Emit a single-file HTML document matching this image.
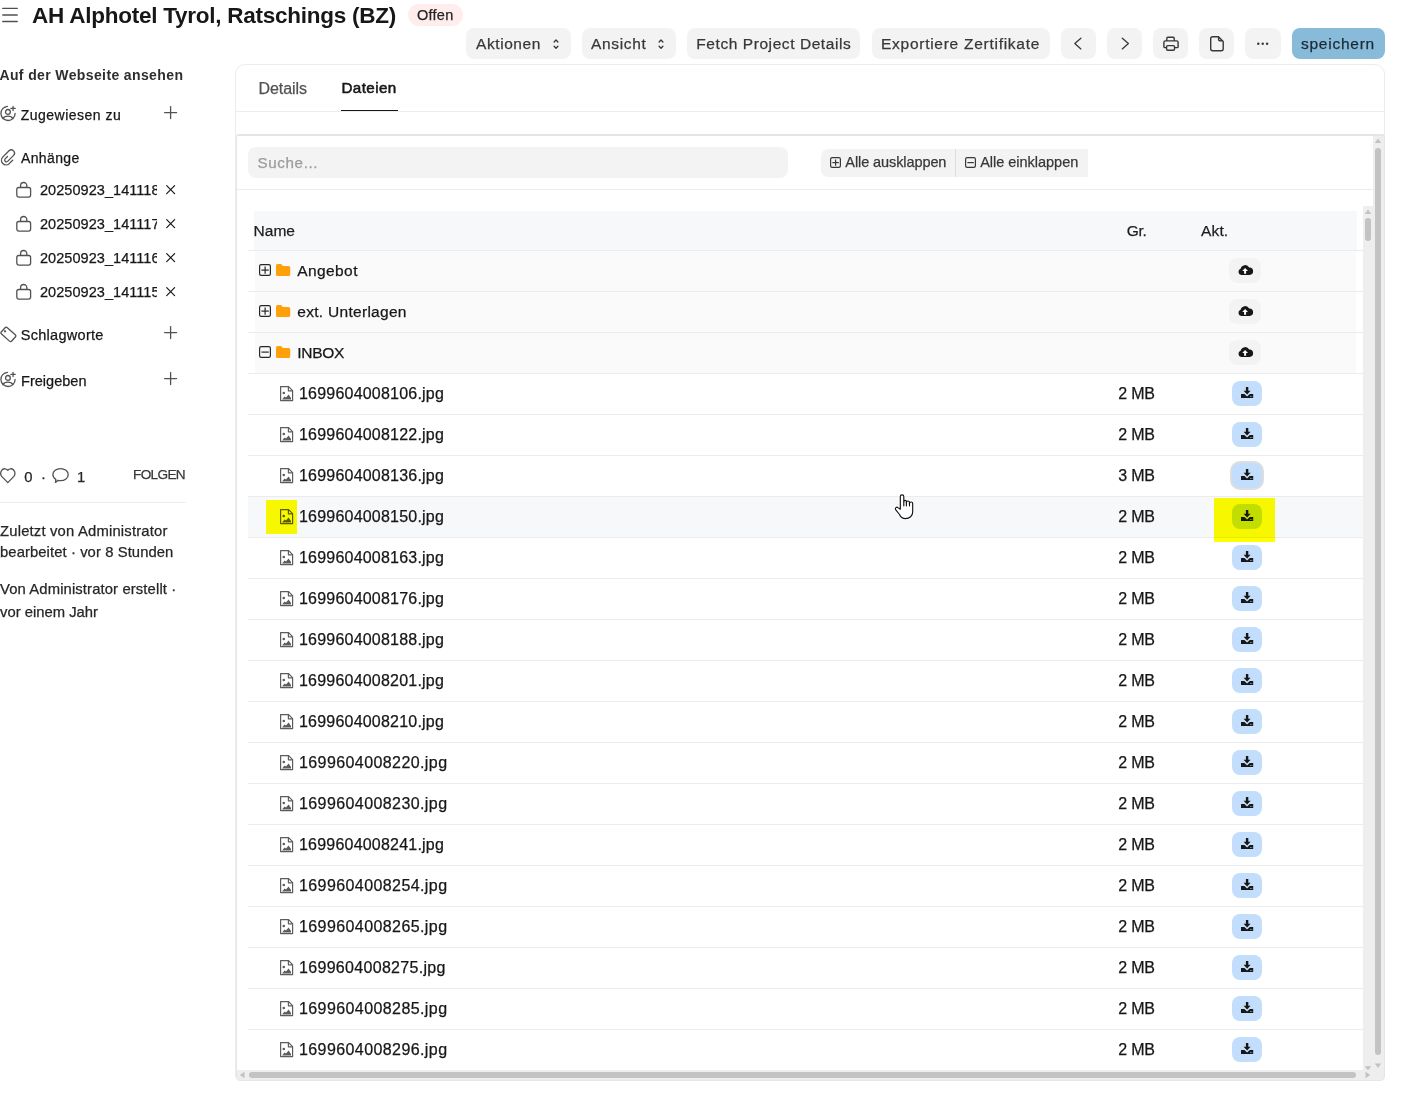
<!DOCTYPE html><html><head><meta charset="utf-8"><title>AH Alphotel Tyrol</title><style>
*{box-sizing:border-box;margin:0;padding:0}
html,body{width:1402px;height:1095px;overflow:hidden;background:#fff;font-family:"Liberation Sans", sans-serif;color:#171717}
.a{position:absolute;white-space:nowrap}
.t{position:absolute;white-space:nowrap;line-height:1;-webkit-text-stroke:0.25px currentColor}
.btn{position:absolute;background:#f3f3f3;border-radius:8px}
svg{position:absolute;overflow:visible}
</style></head><body>
<svg style="left:0;top:0" width="20" height="30"><g stroke="#505050" stroke-width="1.4" stroke-linecap="round"><line x1="2.8" y1="8.4" x2="17.2" y2="8.4"/><line x1="2.8" y1="15" x2="17.2" y2="15"/><line x1="2.8" y1="21.5" x2="17.2" y2="21.5"/></g></svg>
<div class="t" style="left:32px;top:4.55px;font-size:22.5px;color:#171717;letter-spacing:-0.25px;font-weight:bold;-webkit-text-stroke:0;">AH Alphotel Tyrol, Ratschings (BZ)</div>
<div class="a" style="left:408px;top:4px;width:55px;height:22px;border-radius:11px;background:#ffeded"></div>
<div class="t" style="left:417px;top:7.73px;font-size:14.5px;color:#262626;letter-spacing:0.26px;">Offen</div>
<div class="btn" style="left:466px;top:28px;width:105px;height:31px;background:#f3f3f3;border-radius:8px"></div>
<div class="t" style="left:476px;top:35.88px;font-size:15.5px;color:#383838;letter-spacing:0.58px;">Aktionen</div>
<div class="btn" style="left:582px;top:28px;width:94px;height:31px;background:#f3f3f3;border-radius:8px"></div>
<div class="t" style="left:591px;top:35.88px;font-size:15.5px;color:#383838;letter-spacing:0.68px;">Ansicht</div>
<svg style="left:551.7px;top:37.5px" width="8" height="13"><g fill="none" stroke="#383838" stroke-width="1.3" stroke-linecap="round" stroke-linejoin="round"><path d="M2.1 4 L4 2 L5.9 4"/><path d="M2.1 8.2 L4 10.2 L5.9 8.2"/></g></svg>
<svg style="left:657px;top:37.5px" width="8" height="13"><g fill="none" stroke="#383838" stroke-width="1.3" stroke-linecap="round" stroke-linejoin="round"><path d="M2.1 4 L4 2 L5.9 4"/><path d="M2.1 8.2 L4 10.2 L5.9 8.2"/></g></svg>
<div class="btn" style="left:687px;top:28px;width:173px;height:31px;background:#f3f3f3;border-radius:8px"></div>
<div class="t" style="left:696.3px;top:35.88px;font-size:15.5px;color:#383838;letter-spacing:0.57px;">Fetch Project Details</div>
<div class="btn" style="left:872px;top:28px;width:178px;height:31px;background:#f3f3f3;border-radius:8px"></div>
<div class="t" style="left:881px;top:35.88px;font-size:15.5px;color:#383838;letter-spacing:0.73px;">Exportiere Zertifikate</div>
<div class="btn" style="left:1061px;top:28px;width:35px;height:31px;background:#f3f3f3;border-radius:8px"></div>
<svg style="left:1061px;top:28px" width="35" height="31"><path d="M19.9 10.3 L13.8 15.6 L19.9 20.9" fill="none" stroke="#383838" stroke-width="1.3" stroke-linecap="round" stroke-linejoin="round"/></svg>
<div class="btn" style="left:1107px;top:28px;width:35px;height:31px;background:#f3f3f3;border-radius:8px"></div>
<svg style="left:1107px;top:28px" width="35" height="31"><path d="M15.3 10.3 L21.4 15.6 L15.3 20.9" fill="none" stroke="#383838" stroke-width="1.3" stroke-linecap="round" stroke-linejoin="round"/></svg>
<div class="btn" style="left:1153px;top:28px;width:35px;height:31px;background:#f3f3f3;border-radius:8px"></div>
<svg style="left:1153px;top:28px" width="35" height="31"><g fill="none" stroke="#383838" stroke-width="1.4" stroke-linejoin="round"><path d="M13.8 12.9 V10.2 a1 1 0 0 1 1 -1 h5.4 a1 1 0 0 1 1 1 V12.9"/><path d="M13.4 19.6 h-1.6 a0.9 0.9 0 0 1 -0.9 -0.9 V14.4 a1.5 1.5 0 0 1 1.5 -1.5 h11.2 a1.5 1.5 0 0 1 1.5 1.5 V18.7 a0.9 0.9 0 0 1 -0.9 0.9 H21.6"/><rect x="13.6" y="17.6" width="7.9" height="4.6" rx="1"/></g></svg>
<div class="btn" style="left:1199px;top:28px;width:35px;height:31px;background:#f3f3f3;border-radius:8px"></div>
<svg style="left:1199px;top:28px" width="35" height="31"><path d="M11.7 10.7 a2 2 0 0 1 2 -2 h5.8 l4.7 4.8 V20.7 a2 2 0 0 1 -2 2 h-8.5 a2 2 0 0 1 -2 -2 Z M19.6 8.8 V11.6 a1.2 1.2 0 0 0 1.2 1.2 h3.4" fill="none" stroke="#383838" stroke-width="1.4" stroke-linejoin="round"/></svg>
<div class="btn" style="left:1245px;top:28px;width:36px;height:31px;background:#f3f3f3;border-radius:8px"></div>
<svg style="left:1245px;top:28px" width="36" height="31"><g fill="#383838"><circle cx="13.3" cy="15.8" r="1.2"/><circle cx="17.7" cy="15.8" r="1.2"/><circle cx="22.1" cy="15.8" r="1.2"/></g></svg>
<div class="btn" style="left:1292px;top:28px;width:93px;height:31px;background:#88bbda;border-radius:8px"></div>
<div class="t" style="left:1301px;top:35.88px;font-size:15.5px;color:#1c2a36;letter-spacing:0.75px;">speichern</div>
<div class="t" style="left:-0.6px;top:68.15px;font-size:14px;color:#2e2e2e;letter-spacing:0.38px;font-weight:bold;-webkit-text-stroke:0;">Auf der Webseite ansehen</div>
<svg style="left:0px;top:104px" width="18" height="19"><g fill="none" stroke="#525252" stroke-width="1.3" stroke-linecap="round"><path d="M15.1 9.4 A7.1 7.1 0 1 1 7.5 2.32"/><circle cx="7.9" cy="7.9" r="2.4"/><path d="M2.9 14.6 C4.6 11.4 11.2 11.4 12.9 14.6"/><path d="M13.05 2.3 v4.3 M10.9 4.45 h4.3"/></g></svg>
<div class="t" style="left:20.7px;top:107.75px;font-size:14px;color:#171717;letter-spacing:0.49px;">Zugewiesen zu</div>
<svg style="left:164px;top:106px" width="14" height="14"><g stroke="#525252" stroke-width="1.3" stroke-linecap="round"><line x1="6.6" y1="0.6" x2="6.6" y2="12.6"/><line x1="0.6" y1="6.6" x2="12.6" y2="6.6"/></g></svg>
<svg style="left:0;top:147px" width="18" height="21"><path d="M7.5 9.5 L5.12 11.88 A1.77 1.77 0 0 0 7.62 14.38 L13.6 8.41 A3.24 3.24 0 0 0 9.02 3.83 L2.69 10.16 A4.6 4.6 0 0 0 9.19 16.66 L12.65 13.2" fill="none" stroke="#525252" stroke-width="1.3" stroke-linecap="round" stroke-linejoin="round"/></svg>
<div class="t" style="left:21px;top:150.85px;font-size:14px;color:#171717;letter-spacing:0.36px;">Anhänge</div>
<svg style="left:16px;top:182.2px" width="16" height="16"><g fill="none" stroke="#525252" stroke-width="1.3" stroke-linejoin="round"><rect x="0.8" y="5.5" width="13.8" height="9.6" rx="2"/><path d="M4.6 5.5 V3.6 a3.1 3.1 0 0 1 6.2 0 V5.5"/></g></svg>
<div class="a" style="left:40px;top:181.2px;width:117px;height:20px;overflow:hidden">
<div class="t" style="left:0;top:1.73px;font-size:14.5px;letter-spacing:0.05px;color:#171717">20250923_141118.jpg</div></div>
<svg style="left:166px;top:184.89999999999998px" width="10" height="10"><g stroke="#171717" stroke-width="1.2" stroke-linecap="round"><line x1="0.7" y1="0.7" x2="8.6" y2="8.6"/><line x1="8.6" y1="0.7" x2="0.7" y2="8.6"/></g></svg>
<svg style="left:16px;top:216.2px" width="16" height="16"><g fill="none" stroke="#525252" stroke-width="1.3" stroke-linejoin="round"><rect x="0.8" y="5.5" width="13.8" height="9.6" rx="2"/><path d="M4.6 5.5 V3.6 a3.1 3.1 0 0 1 6.2 0 V5.5"/></g></svg>
<div class="a" style="left:40px;top:215.2px;width:117px;height:20px;overflow:hidden">
<div class="t" style="left:0;top:1.73px;font-size:14.5px;letter-spacing:0.05px;color:#171717">20250923_141117.jpg</div></div>
<svg style="left:166px;top:218.89999999999998px" width="10" height="10"><g stroke="#171717" stroke-width="1.2" stroke-linecap="round"><line x1="0.7" y1="0.7" x2="8.6" y2="8.6"/><line x1="8.6" y1="0.7" x2="0.7" y2="8.6"/></g></svg>
<svg style="left:16px;top:250.2px" width="16" height="16"><g fill="none" stroke="#525252" stroke-width="1.3" stroke-linejoin="round"><rect x="0.8" y="5.5" width="13.8" height="9.6" rx="2"/><path d="M4.6 5.5 V3.6 a3.1 3.1 0 0 1 6.2 0 V5.5"/></g></svg>
<div class="a" style="left:40px;top:249.2px;width:117px;height:20px;overflow:hidden">
<div class="t" style="left:0;top:1.73px;font-size:14.5px;letter-spacing:0.05px;color:#171717">20250923_141116.jpg</div></div>
<svg style="left:166px;top:252.89999999999998px" width="10" height="10"><g stroke="#171717" stroke-width="1.2" stroke-linecap="round"><line x1="0.7" y1="0.7" x2="8.6" y2="8.6"/><line x1="8.6" y1="0.7" x2="0.7" y2="8.6"/></g></svg>
<svg style="left:16px;top:284.2px" width="16" height="16"><g fill="none" stroke="#525252" stroke-width="1.3" stroke-linejoin="round"><rect x="0.8" y="5.5" width="13.8" height="9.6" rx="2"/><path d="M4.6 5.5 V3.6 a3.1 3.1 0 0 1 6.2 0 V5.5"/></g></svg>
<div class="a" style="left:40px;top:283.2px;width:117px;height:20px;overflow:hidden">
<div class="t" style="left:0;top:1.73px;font-size:14.5px;letter-spacing:0.05px;color:#171717">20250923_141115.jpg</div></div>
<svg style="left:166px;top:286.9px" width="10" height="10"><g stroke="#171717" stroke-width="1.2" stroke-linecap="round"><line x1="0.7" y1="0.7" x2="8.6" y2="8.6"/><line x1="8.6" y1="0.7" x2="0.7" y2="8.6"/></g></svg>
<svg style="left:0;top:322px" width="18" height="22"><rect x="-6.9" y="-4.3" width="13.8" height="8.6" rx="1.6" transform="translate(8.4,12.4) rotate(42)" fill="none" stroke="#525252" stroke-width="1.3"/><circle cx="5" cy="9.3" r="1.15" fill="#525252"/></svg>
<div class="t" style="left:20.7px;top:327.73px;font-size:14.5px;color:#171717;letter-spacing:0.29px;">Schlagworte</div>
<svg style="left:164px;top:326.4px" width="14" height="14"><g stroke="#525252" stroke-width="1.3" stroke-linecap="round"><line x1="6.6" y1="0.6" x2="6.6" y2="12.6"/><line x1="0.6" y1="6.6" x2="12.6" y2="6.6"/></g></svg>
<svg style="left:0px;top:370px" width="18" height="19"><g fill="none" stroke="#525252" stroke-width="1.3" stroke-linecap="round"><path d="M15.1 9.4 A7.1 7.1 0 1 1 7.5 2.32"/><circle cx="7.9" cy="7.9" r="2.4"/><path d="M2.9 14.6 C4.6 11.4 11.2 11.4 12.9 14.6"/><path d="M13.05 2.3 v4.3 M10.9 4.45 h4.3"/></g></svg>
<div class="t" style="left:21px;top:373.63px;font-size:14.5px;color:#171717;letter-spacing:0.03px;">Freigeben</div>
<svg style="left:164px;top:372.3px" width="14" height="14"><g stroke="#525252" stroke-width="1.3" stroke-linecap="round"><line x1="6.6" y1="0.6" x2="6.6" y2="12.6"/><line x1="0.6" y1="6.6" x2="12.6" y2="6.6"/></g></svg>
<svg style="left:0;top:467px" width="18" height="18"><path d="M7.8 15.6 L1.7 9.4 C0.2 7.8 0.3 4.8 2 3 C3.6 1.3 6.4 1.3 7.8 3.4 C9.2 1.3 12 1.3 13.6 3 C15.3 4.8 15.4 7.8 13.9 9.4 Z" fill="none" stroke="#525252" stroke-width="1.3" stroke-linejoin="round"/></svg>
<div class="t" style="left:24.3px;top:470.27px;font-size:14.8px;color:#262626;letter-spacing:0px;">0</div>
<div class="t" style="left:41px;top:469.67px;font-size:14.8px;color:#262626;letter-spacing:0px;">·</div>
<svg style="left:52px;top:467px" width="18" height="18"><path d="M8.5 1.6 C12.8 1.6 16.2 4.3 16.2 7.6 C16.2 11 12.8 13.7 8.5 13.7 C7.6 13.7 6.8 13.6 6 13.3 L3.5 15.4 L3.8 12.4 C2 11.3 0.9 9.6 0.9 7.6 C0.9 4.3 4.3 1.6 8.5 1.6 Z" fill="none" stroke="#525252" stroke-width="1.3" stroke-linejoin="round"/></svg>
<div class="t" style="left:77px;top:470.27px;font-size:14.8px;color:#262626;letter-spacing:0px;">1</div>
<div class="t" style="left:133px;top:468.29px;font-size:13.6px;color:#383838;letter-spacing:-0.65px;">FOLGEN</div>
<div class="a" style="left:0;top:502px;width:186px;height:1px;background:#ededed"></div>
<div class="t" style="left:0px;top:523.67px;font-size:14.8px;color:#262626;letter-spacing:0.19px;">Zuletzt von Administrator</div>
<div class="t" style="left:0px;top:544.67px;font-size:14.8px;color:#262626;letter-spacing:0.09px;">bearbeitet · vor 8 Stunden</div>
<div class="t" style="left:0px;top:582.47px;font-size:14.8px;color:#262626;letter-spacing:0.13px;">Von Administrator erstellt ·</div>
<div class="t" style="left:0px;top:604.67px;font-size:14.8px;color:#262626;letter-spacing:0.01px;">vor einem Jahr</div>
<div class="a" style="left:235px;top:64px;width:1150px;height:1017px;border:1px solid #ececec;border-radius:10px 10px 5px 5px"></div>
<div class="t" style="left:258.5px;top:81.26px;font-size:16px;color:#525252;letter-spacing:-0.05px;">Details</div>
<div class="t" style="left:341.4px;top:80.03px;font-size:15.2px;color:#171717;letter-spacing:0.42px;-webkit-text-stroke:0.55px #171717;">Dateien</div>
<div class="a" style="left:341px;top:110px;width:57px;height:1.5px;background:#171717"></div>
<div class="a" style="left:236px;top:111px;width:1148px;height:1px;background:#ececec"></div>
<div class="a" style="left:248px;top:147px;width:540px;height:31px;background:#f3f3f3;border-radius:8px"></div>
<div class="t" style="left:257.6px;top:155.33px;font-size:15.2px;color:#9c9c9c;letter-spacing:0.6px;">Suche...</div>
<div class="a" style="left:821px;top:149px;width:267px;height:28px;background:#f3f3f3;border-radius:7px 0 0 7px"></div>
<div class="a" style="left:955px;top:149px;width:1px;height:28px;background:#dedede"></div>
<svg style="left:830px;top:157px" width="11" height="11"><g fill="none" stroke="#383838" stroke-width="1.2"><rect x="0.6" y="0.6" width="9.8" height="9.8" rx="1.6"/><line x1="2.4" y1="5.6" x2="8.799999999999999" y2="5.6"/><line x1="5.6" y1="2.4" x2="5.6" y2="8.799999999999999"/></g></svg>
<div class="t" style="left:845.3px;top:154.93px;font-size:14.5px;color:#383838;letter-spacing:-0.09px;">Alle ausklappen</div>
<svg style="left:965px;top:157px" width="11" height="11"><g fill="none" stroke="#383838" stroke-width="1.2"><rect x="0.6" y="0.6" width="9.8" height="9.8" rx="1.6"/><line x1="2.4" y1="5.6" x2="8.799999999999999" y2="5.6"/></g></svg>
<div class="t" style="left:980.2px;top:154.93px;font-size:14.5px;color:#383838;letter-spacing:-0.02px;">Alle einklappen</div>
<div class="a" style="left:237px;top:189px;width:1136px;height:1px;background:#ececec"></div>
<div class="a" style="left:254px;top:211px;width:1103px;height:39px;background:#f7f8fa"></div>
<div class="t" style="left:253.6px;top:222.78px;font-size:15.5px;color:#1f1f1f;letter-spacing:0px;">Name</div>
<div class="t" style="left:1126.7px;top:222.78px;font-size:15.5px;color:#1f1f1f;letter-spacing:-0.3px;">Gr.</div>
<div class="t" style="left:1201px;top:222.78px;font-size:15.5px;color:#1f1f1f;letter-spacing:0.15px;">Akt.</div>
<div class="a" style="left:255px;top:251px;width:1101px;height:40px;background:#fafafa"></div>
<svg style="left:259px;top:264px" width="12" height="12"><g fill="none" stroke="#262626" stroke-width="1.2"><rect x="0.6" y="0.6" width="10.8" height="10.8" rx="1.6"/><line x1="2.4" y1="6.1" x2="9.799999999999999" y2="6.1"/><line x1="6.1" y1="2.4" x2="6.1" y2="9.799999999999999"/></g></svg>
<svg style="left:276.2px;top:264px" width="15" height="12"><path d="M0 1.6 a1.6 1.6 0 0 1 1.6 -1.6 H5 L6.8 2 H12.6 a1.6 1.6 0 0 1 1.6 1.6 V10.4 a1.6 1.6 0 0 1 -1.6 1.6 H1.6 A1.6 1.6 0 0 1 0 10.4 Z" fill="#ffa00a"/></svg>
<div class="t" style="left:297.3px;top:263.38px;font-size:15.5px;color:#171717;letter-spacing:0.4px;">Angebot</div>
<div class="a" style="left:1229px;top:258px;width:32px;height:25px;background:#f3f3f3;border-radius:8px"></div>
<svg style="left:1238px;top:264px" width="15" height="12"><path d="M3.4 11 A3.2 3.2 0 0 1 2.6 4.8 A4.6 4.6 0 0 1 11.2 3.6 A3.4 3.4 0 0 1 11.6 11 Z" fill="#171717"/><path d="M6.1 9.8 V7.1 H4.2 L7.1 3.9 L10 7.1 H8.1 V9.8 Z" fill="#fff"/></svg>
<div class="a" style="left:248px;top:291px;width:1115px;height:1px;background:#ececec"></div>
<div class="a" style="left:255px;top:292px;width:1101px;height:40px;background:#fafafa"></div>
<svg style="left:259px;top:305px" width="12" height="12"><g fill="none" stroke="#262626" stroke-width="1.2"><rect x="0.6" y="0.6" width="10.8" height="10.8" rx="1.6"/><line x1="2.4" y1="6.1" x2="9.799999999999999" y2="6.1"/><line x1="6.1" y1="2.4" x2="6.1" y2="9.799999999999999"/></g></svg>
<svg style="left:276.2px;top:305px" width="15" height="12"><path d="M0 1.6 a1.6 1.6 0 0 1 1.6 -1.6 H5 L6.8 2 H12.6 a1.6 1.6 0 0 1 1.6 1.6 V10.4 a1.6 1.6 0 0 1 -1.6 1.6 H1.6 A1.6 1.6 0 0 1 0 10.4 Z" fill="#ffa00a"/></svg>
<div class="t" style="left:297.3px;top:304.38px;font-size:15.5px;color:#171717;letter-spacing:0.29px;">ext. Unterlagen</div>
<div class="a" style="left:1229px;top:299px;width:32px;height:25px;background:#f3f3f3;border-radius:8px"></div>
<svg style="left:1238px;top:305px" width="15" height="12"><path d="M3.4 11 A3.2 3.2 0 0 1 2.6 4.8 A4.6 4.6 0 0 1 11.2 3.6 A3.4 3.4 0 0 1 11.6 11 Z" fill="#171717"/><path d="M6.1 9.8 V7.1 H4.2 L7.1 3.9 L10 7.1 H8.1 V9.8 Z" fill="#fff"/></svg>
<div class="a" style="left:248px;top:332px;width:1115px;height:1px;background:#ececec"></div>
<div class="a" style="left:255px;top:333px;width:1101px;height:40px;background:#fafafa"></div>
<svg style="left:259px;top:346px" width="12" height="12"><g fill="none" stroke="#262626" stroke-width="1.2"><rect x="0.6" y="0.6" width="10.8" height="10.8" rx="1.6"/><line x1="2.4" y1="6.1" x2="9.799999999999999" y2="6.1"/></g></svg>
<svg style="left:276.2px;top:346px" width="15" height="12"><path d="M0 1.6 a1.6 1.6 0 0 1 1.6 -1.6 H5 L6.8 2 H12.6 a1.6 1.6 0 0 1 1.6 1.6 V10.4 a1.6 1.6 0 0 1 -1.6 1.6 H1.6 A1.6 1.6 0 0 1 0 10.4 Z" fill="#ffa00a"/></svg>
<div class="t" style="left:297.3px;top:345.38px;font-size:15.5px;color:#171717;letter-spacing:-0.3px;">INBOX</div>
<div class="a" style="left:1229px;top:340px;width:32px;height:25px;background:#f3f3f3;border-radius:8px"></div>
<svg style="left:1238px;top:346px" width="15" height="12"><path d="M3.4 11 A3.2 3.2 0 0 1 2.6 4.8 A4.6 4.6 0 0 1 11.2 3.6 A3.4 3.4 0 0 1 11.6 11 Z" fill="#171717"/><path d="M6.1 9.8 V7.1 H4.2 L7.1 3.9 L10 7.1 H8.1 V9.8 Z" fill="#fff"/></svg>
<div class="a" style="left:248px;top:373px;width:1115px;height:1px;background:#ececec"></div>
<svg style="left:280px;top:386px" width="14" height="16"><g fill="none" stroke="#5c5c5c" stroke-width="1.2" stroke-linejoin="round"><path d="M0.6 0.6 H8.6 L12.6 4.6 V14.6 H0.6 Z"/><path d="M8.4 0.8 V4.8 H12.4"/></g><circle cx="3.8" cy="7" r="1.3" fill="#5c5c5c"/><path d="M2 13.4 L4.6 10.6 L6 11.6 L8.6 8.6 L11 12 V13.4 Z" fill="#5c5c5c"/></svg>
<div class="t" style="left:299px;top:386.46px;font-size:16px;color:#171717;letter-spacing:0.21px;">1699604008106.jpg</div>
<div class="t" style="left:1118.2px;top:386.46px;font-size:16px;color:#171717;letter-spacing:-0.2px;">2 MB</div>
<div class="a" style="left:1232px;top:381px;width:30px;height:25px;background:#c2defc;border-radius:8px;"></div>
<svg style="left:1241px;top:387px" width="12" height="12"><path d="M4.9 0 H7.3 V3.8 H9.6 L6.1 7.4 L2.6 3.8 H4.9 Z" fill="#171717"/><path d="M0 7 H3.4 L6.1 9.6 L8.8 7 H12.2 V11 H0 Z" fill="#171717"/><rect x="9" y="9" width="0.9" height="0.9" fill="#8aa"/><rect x="10.4" y="9" width="0.9" height="0.9" fill="#8aa"/></svg>
<div class="a" style="left:248px;top:414px;width:1115px;height:1px;background:#ececec"></div>
<svg style="left:280px;top:427px" width="14" height="16"><g fill="none" stroke="#5c5c5c" stroke-width="1.2" stroke-linejoin="round"><path d="M0.6 0.6 H8.6 L12.6 4.6 V14.6 H0.6 Z"/><path d="M8.4 0.8 V4.8 H12.4"/></g><circle cx="3.8" cy="7" r="1.3" fill="#5c5c5c"/><path d="M2 13.4 L4.6 10.6 L6 11.6 L8.6 8.6 L11 12 V13.4 Z" fill="#5c5c5c"/></svg>
<div class="t" style="left:299px;top:427.46px;font-size:16px;color:#171717;letter-spacing:0.21px;">1699604008122.jpg</div>
<div class="t" style="left:1118.2px;top:427.46px;font-size:16px;color:#171717;letter-spacing:-0.2px;">2 MB</div>
<div class="a" style="left:1232px;top:422px;width:30px;height:25px;background:#c2defc;border-radius:8px;"></div>
<svg style="left:1241px;top:428px" width="12" height="12"><path d="M4.9 0 H7.3 V3.8 H9.6 L6.1 7.4 L2.6 3.8 H4.9 Z" fill="#171717"/><path d="M0 7 H3.4 L6.1 9.6 L8.8 7 H12.2 V11 H0 Z" fill="#171717"/><rect x="9" y="9" width="0.9" height="0.9" fill="#8aa"/><rect x="10.4" y="9" width="0.9" height="0.9" fill="#8aa"/></svg>
<div class="a" style="left:248px;top:455px;width:1115px;height:1px;background:#ececec"></div>
<svg style="left:280px;top:468px" width="14" height="16"><g fill="none" stroke="#5c5c5c" stroke-width="1.2" stroke-linejoin="round"><path d="M0.6 0.6 H8.6 L12.6 4.6 V14.6 H0.6 Z"/><path d="M8.4 0.8 V4.8 H12.4"/></g><circle cx="3.8" cy="7" r="1.3" fill="#5c5c5c"/><path d="M2 13.4 L4.6 10.6 L6 11.6 L8.6 8.6 L11 12 V13.4 Z" fill="#5c5c5c"/></svg>
<div class="t" style="left:299px;top:468.46px;font-size:16px;color:#171717;letter-spacing:0.21px;">1699604008136.jpg</div>
<div class="t" style="left:1118.2px;top:468.46px;font-size:16px;color:#171717;letter-spacing:-0.2px;">3 MB</div>
<div class="a" style="left:1232px;top:463px;width:30px;height:25px;background:#c2defc;border-radius:8px;box-shadow:0 0 0 2px #dedede;"></div>
<svg style="left:1241px;top:469px" width="12" height="12"><path d="M4.9 0 H7.3 V3.8 H9.6 L6.1 7.4 L2.6 3.8 H4.9 Z" fill="#171717"/><path d="M0 7 H3.4 L6.1 9.6 L8.8 7 H12.2 V11 H0 Z" fill="#171717"/><rect x="9" y="9" width="0.9" height="0.9" fill="#8aa"/><rect x="10.4" y="9" width="0.9" height="0.9" fill="#8aa"/></svg>
<div class="a" style="left:248px;top:496px;width:1115px;height:1px;background:#ececec"></div>
<div class="a" style="left:248px;top:497px;width:1115px;height:40px;background:#f7f8fa"></div>
<svg style="left:280px;top:509px" width="14" height="16"><g fill="none" stroke="#5c5c5c" stroke-width="1.2" stroke-linejoin="round"><path d="M0.6 0.6 H8.6 L12.6 4.6 V14.6 H0.6 Z"/><path d="M8.4 0.8 V4.8 H12.4"/></g><circle cx="3.8" cy="7" r="1.3" fill="#5c5c5c"/><path d="M2 13.4 L4.6 10.6 L6 11.6 L8.6 8.6 L11 12 V13.4 Z" fill="#5c5c5c"/></svg>
<div class="t" style="left:299px;top:509.46px;font-size:16px;color:#171717;letter-spacing:0.21px;">1699604008150.jpg</div>
<div class="t" style="left:1118.2px;top:509.46px;font-size:16px;color:#171717;letter-spacing:-0.2px;">2 MB</div>
<div class="a" style="left:1232px;top:504px;width:30px;height:25px;background:#c2defc;border-radius:8px;"></div>
<svg style="left:1241px;top:510px" width="12" height="12"><path d="M4.9 0 H7.3 V3.8 H9.6 L6.1 7.4 L2.6 3.8 H4.9 Z" fill="#171717"/><path d="M0 7 H3.4 L6.1 9.6 L8.8 7 H12.2 V11 H0 Z" fill="#171717"/><rect x="9" y="9" width="0.9" height="0.9" fill="#8aa"/><rect x="10.4" y="9" width="0.9" height="0.9" fill="#8aa"/></svg>
<div class="a" style="left:248px;top:537px;width:1115px;height:1px;background:#ececec"></div>
<svg style="left:280px;top:550px" width="14" height="16"><g fill="none" stroke="#5c5c5c" stroke-width="1.2" stroke-linejoin="round"><path d="M0.6 0.6 H8.6 L12.6 4.6 V14.6 H0.6 Z"/><path d="M8.4 0.8 V4.8 H12.4"/></g><circle cx="3.8" cy="7" r="1.3" fill="#5c5c5c"/><path d="M2 13.4 L4.6 10.6 L6 11.6 L8.6 8.6 L11 12 V13.4 Z" fill="#5c5c5c"/></svg>
<div class="t" style="left:299px;top:550.46px;font-size:16px;color:#171717;letter-spacing:0.21px;">1699604008163.jpg</div>
<div class="t" style="left:1118.2px;top:550.46px;font-size:16px;color:#171717;letter-spacing:-0.2px;">2 MB</div>
<div class="a" style="left:1232px;top:545px;width:30px;height:25px;background:#c2defc;border-radius:8px;"></div>
<svg style="left:1241px;top:551px" width="12" height="12"><path d="M4.9 0 H7.3 V3.8 H9.6 L6.1 7.4 L2.6 3.8 H4.9 Z" fill="#171717"/><path d="M0 7 H3.4 L6.1 9.6 L8.8 7 H12.2 V11 H0 Z" fill="#171717"/><rect x="9" y="9" width="0.9" height="0.9" fill="#8aa"/><rect x="10.4" y="9" width="0.9" height="0.9" fill="#8aa"/></svg>
<div class="a" style="left:248px;top:578px;width:1115px;height:1px;background:#ececec"></div>
<svg style="left:280px;top:591px" width="14" height="16"><g fill="none" stroke="#5c5c5c" stroke-width="1.2" stroke-linejoin="round"><path d="M0.6 0.6 H8.6 L12.6 4.6 V14.6 H0.6 Z"/><path d="M8.4 0.8 V4.8 H12.4"/></g><circle cx="3.8" cy="7" r="1.3" fill="#5c5c5c"/><path d="M2 13.4 L4.6 10.6 L6 11.6 L8.6 8.6 L11 12 V13.4 Z" fill="#5c5c5c"/></svg>
<div class="t" style="left:299px;top:591.46px;font-size:16px;color:#171717;letter-spacing:0.21px;">1699604008176.jpg</div>
<div class="t" style="left:1118.2px;top:591.46px;font-size:16px;color:#171717;letter-spacing:-0.2px;">2 MB</div>
<div class="a" style="left:1232px;top:586px;width:30px;height:25px;background:#c2defc;border-radius:8px;"></div>
<svg style="left:1241px;top:592px" width="12" height="12"><path d="M4.9 0 H7.3 V3.8 H9.6 L6.1 7.4 L2.6 3.8 H4.9 Z" fill="#171717"/><path d="M0 7 H3.4 L6.1 9.6 L8.8 7 H12.2 V11 H0 Z" fill="#171717"/><rect x="9" y="9" width="0.9" height="0.9" fill="#8aa"/><rect x="10.4" y="9" width="0.9" height="0.9" fill="#8aa"/></svg>
<div class="a" style="left:248px;top:619px;width:1115px;height:1px;background:#ececec"></div>
<svg style="left:280px;top:632px" width="14" height="16"><g fill="none" stroke="#5c5c5c" stroke-width="1.2" stroke-linejoin="round"><path d="M0.6 0.6 H8.6 L12.6 4.6 V14.6 H0.6 Z"/><path d="M8.4 0.8 V4.8 H12.4"/></g><circle cx="3.8" cy="7" r="1.3" fill="#5c5c5c"/><path d="M2 13.4 L4.6 10.6 L6 11.6 L8.6 8.6 L11 12 V13.4 Z" fill="#5c5c5c"/></svg>
<div class="t" style="left:299px;top:632.46px;font-size:16px;color:#171717;letter-spacing:0.21px;">1699604008188.jpg</div>
<div class="t" style="left:1118.2px;top:632.46px;font-size:16px;color:#171717;letter-spacing:-0.2px;">2 MB</div>
<div class="a" style="left:1232px;top:627px;width:30px;height:25px;background:#c2defc;border-radius:8px;"></div>
<svg style="left:1241px;top:633px" width="12" height="12"><path d="M4.9 0 H7.3 V3.8 H9.6 L6.1 7.4 L2.6 3.8 H4.9 Z" fill="#171717"/><path d="M0 7 H3.4 L6.1 9.6 L8.8 7 H12.2 V11 H0 Z" fill="#171717"/><rect x="9" y="9" width="0.9" height="0.9" fill="#8aa"/><rect x="10.4" y="9" width="0.9" height="0.9" fill="#8aa"/></svg>
<div class="a" style="left:248px;top:660px;width:1115px;height:1px;background:#ececec"></div>
<svg style="left:280px;top:673px" width="14" height="16"><g fill="none" stroke="#5c5c5c" stroke-width="1.2" stroke-linejoin="round"><path d="M0.6 0.6 H8.6 L12.6 4.6 V14.6 H0.6 Z"/><path d="M8.4 0.8 V4.8 H12.4"/></g><circle cx="3.8" cy="7" r="1.3" fill="#5c5c5c"/><path d="M2 13.4 L4.6 10.6 L6 11.6 L8.6 8.6 L11 12 V13.4 Z" fill="#5c5c5c"/></svg>
<div class="t" style="left:299px;top:673.46px;font-size:16px;color:#171717;letter-spacing:0.21px;">1699604008201.jpg</div>
<div class="t" style="left:1118.2px;top:673.46px;font-size:16px;color:#171717;letter-spacing:-0.2px;">2 MB</div>
<div class="a" style="left:1232px;top:668px;width:30px;height:25px;background:#c2defc;border-radius:8px;"></div>
<svg style="left:1241px;top:674px" width="12" height="12"><path d="M4.9 0 H7.3 V3.8 H9.6 L6.1 7.4 L2.6 3.8 H4.9 Z" fill="#171717"/><path d="M0 7 H3.4 L6.1 9.6 L8.8 7 H12.2 V11 H0 Z" fill="#171717"/><rect x="9" y="9" width="0.9" height="0.9" fill="#8aa"/><rect x="10.4" y="9" width="0.9" height="0.9" fill="#8aa"/></svg>
<div class="a" style="left:248px;top:701px;width:1115px;height:1px;background:#ececec"></div>
<svg style="left:280px;top:714px" width="14" height="16"><g fill="none" stroke="#5c5c5c" stroke-width="1.2" stroke-linejoin="round"><path d="M0.6 0.6 H8.6 L12.6 4.6 V14.6 H0.6 Z"/><path d="M8.4 0.8 V4.8 H12.4"/></g><circle cx="3.8" cy="7" r="1.3" fill="#5c5c5c"/><path d="M2 13.4 L4.6 10.6 L6 11.6 L8.6 8.6 L11 12 V13.4 Z" fill="#5c5c5c"/></svg>
<div class="t" style="left:299px;top:714.46px;font-size:16px;color:#171717;letter-spacing:0.21px;">1699604008210.jpg</div>
<div class="t" style="left:1118.2px;top:714.46px;font-size:16px;color:#171717;letter-spacing:-0.2px;">2 MB</div>
<div class="a" style="left:1232px;top:709px;width:30px;height:25px;background:#c2defc;border-radius:8px;"></div>
<svg style="left:1241px;top:715px" width="12" height="12"><path d="M4.9 0 H7.3 V3.8 H9.6 L6.1 7.4 L2.6 3.8 H4.9 Z" fill="#171717"/><path d="M0 7 H3.4 L6.1 9.6 L8.8 7 H12.2 V11 H0 Z" fill="#171717"/><rect x="9" y="9" width="0.9" height="0.9" fill="#8aa"/><rect x="10.4" y="9" width="0.9" height="0.9" fill="#8aa"/></svg>
<div class="a" style="left:248px;top:742px;width:1115px;height:1px;background:#ececec"></div>
<svg style="left:280px;top:755px" width="14" height="16"><g fill="none" stroke="#5c5c5c" stroke-width="1.2" stroke-linejoin="round"><path d="M0.6 0.6 H8.6 L12.6 4.6 V14.6 H0.6 Z"/><path d="M8.4 0.8 V4.8 H12.4"/></g><circle cx="3.8" cy="7" r="1.3" fill="#5c5c5c"/><path d="M2 13.4 L4.6 10.6 L6 11.6 L8.6 8.6 L11 12 V13.4 Z" fill="#5c5c5c"/></svg>
<div class="t" style="left:299px;top:755.46px;font-size:16px;color:#171717;letter-spacing:0.41px;">1699604008220.jpg</div>
<div class="t" style="left:1118.2px;top:755.46px;font-size:16px;color:#171717;letter-spacing:-0.2px;">2 MB</div>
<div class="a" style="left:1232px;top:750px;width:30px;height:25px;background:#c2defc;border-radius:8px;"></div>
<svg style="left:1241px;top:756px" width="12" height="12"><path d="M4.9 0 H7.3 V3.8 H9.6 L6.1 7.4 L2.6 3.8 H4.9 Z" fill="#171717"/><path d="M0 7 H3.4 L6.1 9.6 L8.8 7 H12.2 V11 H0 Z" fill="#171717"/><rect x="9" y="9" width="0.9" height="0.9" fill="#8aa"/><rect x="10.4" y="9" width="0.9" height="0.9" fill="#8aa"/></svg>
<div class="a" style="left:248px;top:783px;width:1115px;height:1px;background:#ececec"></div>
<svg style="left:280px;top:796px" width="14" height="16"><g fill="none" stroke="#5c5c5c" stroke-width="1.2" stroke-linejoin="round"><path d="M0.6 0.6 H8.6 L12.6 4.6 V14.6 H0.6 Z"/><path d="M8.4 0.8 V4.8 H12.4"/></g><circle cx="3.8" cy="7" r="1.3" fill="#5c5c5c"/><path d="M2 13.4 L4.6 10.6 L6 11.6 L8.6 8.6 L11 12 V13.4 Z" fill="#5c5c5c"/></svg>
<div class="t" style="left:299px;top:796.46px;font-size:16px;color:#171717;letter-spacing:0.41px;">1699604008230.jpg</div>
<div class="t" style="left:1118.2px;top:796.46px;font-size:16px;color:#171717;letter-spacing:-0.2px;">2 MB</div>
<div class="a" style="left:1232px;top:791px;width:30px;height:25px;background:#c2defc;border-radius:8px;"></div>
<svg style="left:1241px;top:797px" width="12" height="12"><path d="M4.9 0 H7.3 V3.8 H9.6 L6.1 7.4 L2.6 3.8 H4.9 Z" fill="#171717"/><path d="M0 7 H3.4 L6.1 9.6 L8.8 7 H12.2 V11 H0 Z" fill="#171717"/><rect x="9" y="9" width="0.9" height="0.9" fill="#8aa"/><rect x="10.4" y="9" width="0.9" height="0.9" fill="#8aa"/></svg>
<div class="a" style="left:248px;top:824px;width:1115px;height:1px;background:#ececec"></div>
<svg style="left:280px;top:837px" width="14" height="16"><g fill="none" stroke="#5c5c5c" stroke-width="1.2" stroke-linejoin="round"><path d="M0.6 0.6 H8.6 L12.6 4.6 V14.6 H0.6 Z"/><path d="M8.4 0.8 V4.8 H12.4"/></g><circle cx="3.8" cy="7" r="1.3" fill="#5c5c5c"/><path d="M2 13.4 L4.6 10.6 L6 11.6 L8.6 8.6 L11 12 V13.4 Z" fill="#5c5c5c"/></svg>
<div class="t" style="left:299px;top:837.46px;font-size:16px;color:#171717;letter-spacing:0.21px;">1699604008241.jpg</div>
<div class="t" style="left:1118.2px;top:837.46px;font-size:16px;color:#171717;letter-spacing:-0.2px;">2 MB</div>
<div class="a" style="left:1232px;top:832px;width:30px;height:25px;background:#c2defc;border-radius:8px;"></div>
<svg style="left:1241px;top:838px" width="12" height="12"><path d="M4.9 0 H7.3 V3.8 H9.6 L6.1 7.4 L2.6 3.8 H4.9 Z" fill="#171717"/><path d="M0 7 H3.4 L6.1 9.6 L8.8 7 H12.2 V11 H0 Z" fill="#171717"/><rect x="9" y="9" width="0.9" height="0.9" fill="#8aa"/><rect x="10.4" y="9" width="0.9" height="0.9" fill="#8aa"/></svg>
<div class="a" style="left:248px;top:865px;width:1115px;height:1px;background:#ececec"></div>
<svg style="left:280px;top:878px" width="14" height="16"><g fill="none" stroke="#5c5c5c" stroke-width="1.2" stroke-linejoin="round"><path d="M0.6 0.6 H8.6 L12.6 4.6 V14.6 H0.6 Z"/><path d="M8.4 0.8 V4.8 H12.4"/></g><circle cx="3.8" cy="7" r="1.3" fill="#5c5c5c"/><path d="M2 13.4 L4.6 10.6 L6 11.6 L8.6 8.6 L11 12 V13.4 Z" fill="#5c5c5c"/></svg>
<div class="t" style="left:299px;top:878.46px;font-size:16px;color:#171717;letter-spacing:0.41px;">1699604008254.jpg</div>
<div class="t" style="left:1118.2px;top:878.46px;font-size:16px;color:#171717;letter-spacing:-0.2px;">2 MB</div>
<div class="a" style="left:1232px;top:873px;width:30px;height:25px;background:#c2defc;border-radius:8px;"></div>
<svg style="left:1241px;top:879px" width="12" height="12"><path d="M4.9 0 H7.3 V3.8 H9.6 L6.1 7.4 L2.6 3.8 H4.9 Z" fill="#171717"/><path d="M0 7 H3.4 L6.1 9.6 L8.8 7 H12.2 V11 H0 Z" fill="#171717"/><rect x="9" y="9" width="0.9" height="0.9" fill="#8aa"/><rect x="10.4" y="9" width="0.9" height="0.9" fill="#8aa"/></svg>
<div class="a" style="left:248px;top:906px;width:1115px;height:1px;background:#ececec"></div>
<svg style="left:280px;top:919px" width="14" height="16"><g fill="none" stroke="#5c5c5c" stroke-width="1.2" stroke-linejoin="round"><path d="M0.6 0.6 H8.6 L12.6 4.6 V14.6 H0.6 Z"/><path d="M8.4 0.8 V4.8 H12.4"/></g><circle cx="3.8" cy="7" r="1.3" fill="#5c5c5c"/><path d="M2 13.4 L4.6 10.6 L6 11.6 L8.6 8.6 L11 12 V13.4 Z" fill="#5c5c5c"/></svg>
<div class="t" style="left:299px;top:919.46px;font-size:16px;color:#171717;letter-spacing:0.41px;">1699604008265.jpg</div>
<div class="t" style="left:1118.2px;top:919.46px;font-size:16px;color:#171717;letter-spacing:-0.2px;">2 MB</div>
<div class="a" style="left:1232px;top:914px;width:30px;height:25px;background:#c2defc;border-radius:8px;"></div>
<svg style="left:1241px;top:920px" width="12" height="12"><path d="M4.9 0 H7.3 V3.8 H9.6 L6.1 7.4 L2.6 3.8 H4.9 Z" fill="#171717"/><path d="M0 7 H3.4 L6.1 9.6 L8.8 7 H12.2 V11 H0 Z" fill="#171717"/><rect x="9" y="9" width="0.9" height="0.9" fill="#8aa"/><rect x="10.4" y="9" width="0.9" height="0.9" fill="#8aa"/></svg>
<div class="a" style="left:248px;top:947px;width:1115px;height:1px;background:#ececec"></div>
<svg style="left:280px;top:960px" width="14" height="16"><g fill="none" stroke="#5c5c5c" stroke-width="1.2" stroke-linejoin="round"><path d="M0.6 0.6 H8.6 L12.6 4.6 V14.6 H0.6 Z"/><path d="M8.4 0.8 V4.8 H12.4"/></g><circle cx="3.8" cy="7" r="1.3" fill="#5c5c5c"/><path d="M2 13.4 L4.6 10.6 L6 11.6 L8.6 8.6 L11 12 V13.4 Z" fill="#5c5c5c"/></svg>
<div class="t" style="left:299px;top:960.46px;font-size:16px;color:#171717;letter-spacing:0.31px;">1699604008275.jpg</div>
<div class="t" style="left:1118.2px;top:960.46px;font-size:16px;color:#171717;letter-spacing:-0.2px;">2 MB</div>
<div class="a" style="left:1232px;top:955px;width:30px;height:25px;background:#c2defc;border-radius:8px;"></div>
<svg style="left:1241px;top:961px" width="12" height="12"><path d="M4.9 0 H7.3 V3.8 H9.6 L6.1 7.4 L2.6 3.8 H4.9 Z" fill="#171717"/><path d="M0 7 H3.4 L6.1 9.6 L8.8 7 H12.2 V11 H0 Z" fill="#171717"/><rect x="9" y="9" width="0.9" height="0.9" fill="#8aa"/><rect x="10.4" y="9" width="0.9" height="0.9" fill="#8aa"/></svg>
<div class="a" style="left:248px;top:988px;width:1115px;height:1px;background:#ececec"></div>
<svg style="left:280px;top:1001px" width="14" height="16"><g fill="none" stroke="#5c5c5c" stroke-width="1.2" stroke-linejoin="round"><path d="M0.6 0.6 H8.6 L12.6 4.6 V14.6 H0.6 Z"/><path d="M8.4 0.8 V4.8 H12.4"/></g><circle cx="3.8" cy="7" r="1.3" fill="#5c5c5c"/><path d="M2 13.4 L4.6 10.6 L6 11.6 L8.6 8.6 L11 12 V13.4 Z" fill="#5c5c5c"/></svg>
<div class="t" style="left:299px;top:1001.46px;font-size:16px;color:#171717;letter-spacing:0.41px;">1699604008285.jpg</div>
<div class="t" style="left:1118.2px;top:1001.46px;font-size:16px;color:#171717;letter-spacing:-0.2px;">2 MB</div>
<div class="a" style="left:1232px;top:996px;width:30px;height:25px;background:#c2defc;border-radius:8px;"></div>
<svg style="left:1241px;top:1002px" width="12" height="12"><path d="M4.9 0 H7.3 V3.8 H9.6 L6.1 7.4 L2.6 3.8 H4.9 Z" fill="#171717"/><path d="M0 7 H3.4 L6.1 9.6 L8.8 7 H12.2 V11 H0 Z" fill="#171717"/><rect x="9" y="9" width="0.9" height="0.9" fill="#8aa"/><rect x="10.4" y="9" width="0.9" height="0.9" fill="#8aa"/></svg>
<div class="a" style="left:248px;top:1029px;width:1115px;height:1px;background:#ececec"></div>
<svg style="left:280px;top:1042px" width="14" height="16"><g fill="none" stroke="#5c5c5c" stroke-width="1.2" stroke-linejoin="round"><path d="M0.6 0.6 H8.6 L12.6 4.6 V14.6 H0.6 Z"/><path d="M8.4 0.8 V4.8 H12.4"/></g><circle cx="3.8" cy="7" r="1.3" fill="#5c5c5c"/><path d="M2 13.4 L4.6 10.6 L6 11.6 L8.6 8.6 L11 12 V13.4 Z" fill="#5c5c5c"/></svg>
<div class="t" style="left:299px;top:1042.46px;font-size:16px;color:#171717;letter-spacing:0.41px;">1699604008296.jpg</div>
<div class="t" style="left:1118.2px;top:1042.46px;font-size:16px;color:#171717;letter-spacing:-0.2px;">2 MB</div>
<div class="a" style="left:1232px;top:1037px;width:30px;height:25px;background:#c2defc;border-radius:8px;"></div>
<svg style="left:1241px;top:1043px" width="12" height="12"><path d="M4.9 0 H7.3 V3.8 H9.6 L6.1 7.4 L2.6 3.8 H4.9 Z" fill="#171717"/><path d="M0 7 H3.4 L6.1 9.6 L8.8 7 H12.2 V11 H0 Z" fill="#171717"/><rect x="9" y="9" width="0.9" height="0.9" fill="#8aa"/><rect x="10.4" y="9" width="0.9" height="0.9" fill="#8aa"/></svg>
<div class="a" style="left:248px;top:1070px;width:1115px;height:1px;background:#ececec"></div>
<div class="a" style="left:248px;top:250px;width:1115px;height:1px;background:#ececec"></div>
<div class="a" style="left:266px;top:500px;width:31px;height:34px;background:#ffff00;mix-blend-mode:multiply"></div>
<div class="a" style="left:1214px;top:498px;width:61px;height:44px;background:#ffff00;mix-blend-mode:multiply"></div>
<div class="a" style="left:237px;top:136px;width:1147px;height:944px;overflow:hidden;border-radius:0 0 4px 3px">
<div class="a" style="left:1136px;top:0px;width:11px;height:944px;background:#eeeeee"></div>
<div class="a" style="left:1138px;top:12px;width:6px;height:907px;background:#c3c3c3;border-radius:3px"></div>
<svg style="left:1137px;top:2px" width="8" height="6"><path d="M4 0.5 L7.2 5 H0.8 Z" fill="#c2c2c2"/></svg>
<svg style="left:1137px;top:926.5px" width="8" height="6"><path d="M0.8 0.5 H7.2 L4 5 Z" fill="#c2c2c2"/></svg>
<div class="a" style="left:1126px;top:70px;width:10px;height:864px;background:#eeeeee"></div>
<div class="a" style="left:1128px;top:82px;width:6px;height:23px;background:#c3c3c3;border-radius:3px"></div>
<svg style="left:1127px;top:72.5px" width="8" height="6"><path d="M4 0.5 L7.2 5 H0.8 Z" fill="#c2c2c2"/></svg>
<svg style="left:1127px;top:930px" width="8" height="5"><path d="M0.8 0.3 H7.2 L4 4.2 Z" fill="#c2c2c2"/></svg>
<div class="a" style="left:0px;top:934px;width:1136px;height:10px;background:#eeeeee"></div>
<div class="a" style="left:12px;top:936px;width:1107px;height:6px;background:#c3c3c3;border-radius:3px"></div>
<svg style="left:1.5px;top:935px" width="6" height="8"><path d="M0.8 4 L5.5 0.8 V7.2 Z" fill="#c2c2c2"/></svg>
<svg style="left:1128px;top:935px" width="6" height="8"><path d="M0.5 0.8 L5.2 4 L0.5 7.2 Z" fill="#c2c2c2"/></svg>
</div>
<div class="a" style="left:236px;top:134px;width:1149px;height:947px;border:1px solid #e6e6e6;border-top:2px solid #e4e4e4;border-radius:3px 3px 5px 5px"></div>
<svg style="left:885px;top:485px" width="40" height="40"><path d="M15.3 24.2 V11.6 A1.75 1.75 0 0 1 18.8 11.6 V16.6 A1.3 1.3 0 0 1 21.4 16.6 V17.5 A1.55 1.55 0 0 1 24.5 17.5 V18.6 A1.6 1.6 0 0 1 27.7 18.6 V27 C27.7 31 24.5 33.6 20.5 33.6 C17.5 33.6 15.5 32 14.5 29.5 L10.6 24.6 A1.6 1.6 0 0 1 13 22.6 Z" fill="#fff" stroke="#fff" stroke-width="3" stroke-linejoin="round"/><path d="M15.3 24.2 V11.6 A1.75 1.75 0 0 1 18.8 11.6 V16.6 A1.3 1.3 0 0 1 21.4 16.6 V17.5 A1.55 1.55 0 0 1 24.5 17.5 V18.6 A1.6 1.6 0 0 1 27.7 18.6 V27 C27.7 31 24.5 33.6 20.5 33.6 C17.5 33.6 15.5 32 14.5 29.5 L10.6 24.6 A1.6 1.6 0 0 1 13 22.6 Z" fill="#fff" stroke="#111" stroke-width="1.15" stroke-linejoin="round"/><g stroke="#111" stroke-width="1.15" stroke-linecap="round"><line x1="18.8" y1="16.8" x2="18.8" y2="20.8"/><line x1="21.4" y1="17.4" x2="21.4" y2="20.8"/><line x1="24.5" y1="18.4" x2="24.5" y2="20.8"/></g></svg>
</body></html>
